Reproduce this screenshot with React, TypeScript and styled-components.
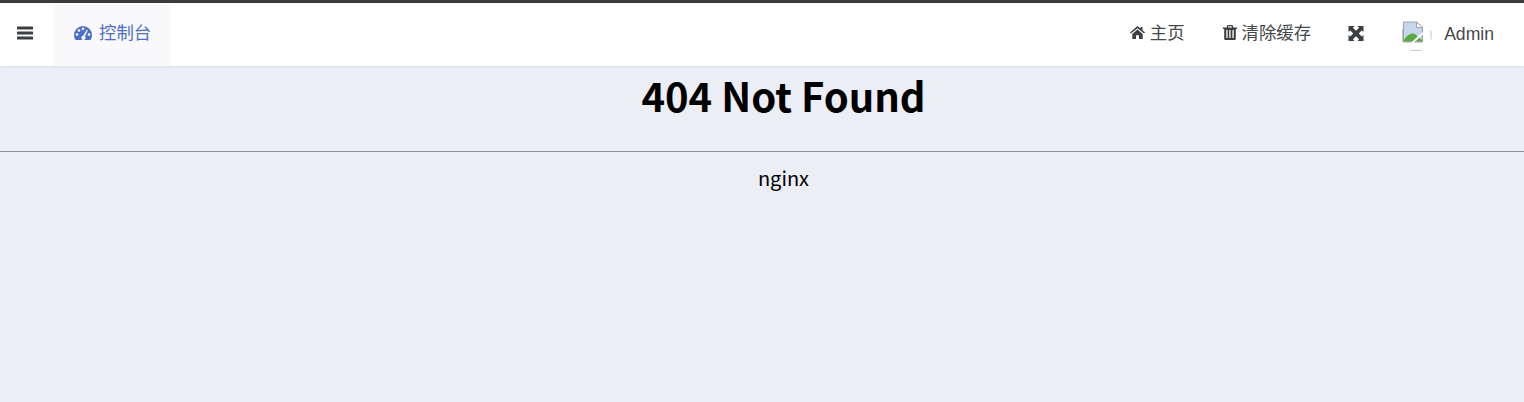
import styled, { createGlobalStyle } from 'styled-components'

const GlobalStyle = createGlobalStyle`
  html, body {
    margin: 0;
    padding: 0;
    height: 100%;
    background: #ebeef4;
  }
  #root {
    height: 100%;
  }
`

const Page = styled.div`
  min-height: 402px;
  overflow: hidden;
  background: #ebeef4;
  font-family: "Liberation Sans", Arial, "Noto Sans CJK SC", sans-serif;
`

const Navbar = styled.header`
  display: flex;
  align-items: stretch;
  justify-content: space-between;
  height: 63px;
  background: #fff;
  border-top: 3px solid #3a3a3a;
  box-shadow: 0 1px 2px rgba(0, 0, 0, 0.06);
`

const NavGroup = styled.nav`
  display: flex;
  align-items: stretch;
`

const NavItem = styled.a<{ $active?: boolean }>`
  display: flex;
  align-items: center;
  gap: 5px;
  padding: 0 ${p => (p.$active ? '20px' : '19px')} 3px;
  font-size: 17.4px;
  line-height: 24px;
  color: ${p => (p.$active ? '#4e6ec7' : '#46494c')};
  background: ${p => (p.$active ? '#f9f9fb' : 'transparent')};
`

const TextItem = styled(NavItem)`
  padding-bottom: 4px;
`

const DashboardItem = styled(TextItem)`
  gap: 7px;
  padding-left: 21px;
`

const MenuToggle = styled(NavItem)`
  padding: 0 17px 3px;
  width: 53px;
  box-sizing: border-box;
`

const ExpandItem = styled(NavItem)`
  padding-left: 18px;
`

const Avatar = styled.span`
  display: block;
  width: 30px;
  height: 30px;
  margin: 3px 12px 0 0;
`

const UserItem = styled(NavItem)`
  gap: 0;
  padding: 0 30px 1px 19px;
  font-size: 17.6px;
`

const Main = styled.main`
  text-align: center;
`

const Title = styled.h1`
  margin: 0;
  padding: 6px 0 0 43px;
  height: 79px;
  font-family: "Noto Sans CJK SC", "Noto Sans", sans-serif;
  font-size: 40px;
  line-height: 46px;
  font-weight: 700;
  color: #000;
`

const Rule = styled.hr`
  margin: 0;
  height: 1px;
  border: none;
  background: #929292;
`

const Server = styled.div`
  padding: 12px 0 0 43px;
  font-family: "Noto Sans CJK SC", "Noto Sans", sans-serif;
  font-size: 20px;
  line-height: 28px;
  color: #000;
`

function BarsIcon() {
  return (
    <svg width="16" height="14" viewBox="0 0 16 14" fill="#3d4043">
      <rect x="0" y="0.5" width="16" height="3" rx="0.6" />
      <rect x="0" y="5.5" width="16" height="3" rx="0.6" />
      <rect x="0" y="10.5" width="16" height="3" rx="0.6" />
    </svg>
  )
}

function DashboardIcon() {
  return (
    <svg width="18" height="14" viewBox="0 0 18 14">
      <path d="M9 0a9 9 0 0 1 9 9c0 1.900-.6 3.600-1.600 5H1.600A8.800 8.800 0 0 1 0 9a9 9 0 0 1 9-9z" fill="#4e6ec7" />
      <g fill="#fff">
        <circle cx="3" cy="8.500" r="1.300" />
        <circle cx="5" cy="4.500" r="1.300" />
        <circle cx="9" cy="2.800" r="1.300" />
        <circle cx="15" cy="8.500" r="1.300" />
        <path d="M12.800 3.800l1 .5-3 6a2 2 0 1 1-1.500-.5z" />
      </g>
    </svg>
  )
}

function HomeIcon() {
  return (
    <svg width="15" height="13" viewBox="0 0 15 13" fill="#3d4043">
      <path d="M7.500 0L10.500 2.500V1h2v3.200L15 6.400l-.9 1.100L7.500 2.200.9 7.500 0 6.400z" />
      <path d="M2.300 7.900L7.500 3.600l5.200 4.300V13H9V9.200H6V13H2.300z" />
    </svg>
  )
}

function TrashIcon() {
  return (
    <svg width="14" height="15" viewBox="0 0 14 15" fill="#3d4043">
      <path fillRule="evenodd" d="M4.500 0h5l1 2.500H14V4h-1.200v10a1 1 0 0 1-1 1H2.200a1 1 0 0 1-1-1V4H0V2.500h3.500zM5.300 1.300L4.900 2.500h4.200l-.4-1.200z" />
      <g fill="#fff">
        <rect x="3.300" y="5" width="1.300" height="8" />
        <rect x="6.300" y="5" width="1.300" height="8" />
        <rect x="9.400" y="5" width="1.300" height="8" />
      </g>
    </svg>
  )
}

function ExpandIcon() {
  return (
    <svg width="16" height="15" viewBox="0 0 16 16" fill="#3d4043">
      <path d="M0 0h6.500L4.700 1.800 8 5.100l3.300-3.300L9.500 0H16v6.500l-1.800-1.800L10.900 8l3.300 3.300 1.800-1.800V16H9.500l1.800-1.800L8 10.900l-3.300 3.300L6.500 16H0V9.500l1.800 1.800L5.100 8 1.800 4.700 0 6.500z" />
    </svg>
  )
}

function BrokenImage() {
  return (
    <svg width="30" height="30" viewBox="0 0 30 30">
      <path d="M29 9.500v9M8.500 29.300h11" fill="none" stroke="#c4c4c4" />
      <path d="M.5 8v13" fill="none" stroke="#c4c4c4" />
      <path d="M1.500 1h13l6 5.500V21h-19z" fill="#c6d6ee" stroke="#a0a4aa" />
      <path d="M2 19c3-6 9-8 12-5l6 5v1.500H2z" fill="#5aa83f" />
      <path d="M9 23L21 12" stroke="#fff" strokeWidth="2" />
      <path d="M14.500 1v5.500h6z" fill="#fff" stroke="#a0a4aa" />
    </svg>
  )
}

export default function App() {
  return (
    <Page>
      <GlobalStyle />
      <Navbar>
        <NavGroup>
          <MenuToggle><BarsIcon /></MenuToggle>
          <DashboardItem $active><DashboardIcon /> 控制台</DashboardItem>
        </NavGroup>
        <NavGroup>
          <TextItem><HomeIcon /> 主页</TextItem>
          <TextItem><TrashIcon /> 清除缓存</TextItem>
          <ExpandItem><ExpandIcon /></ExpandItem>
          <UserItem>
            <Avatar><BrokenImage /></Avatar>
            Admin
          </UserItem>
        </NavGroup>
      </Navbar>
      <Main>
        <Title>404 Not Found</Title>
        <Rule />
        <Server>nginx</Server>
      </Main>
    </Page>
  )
}
